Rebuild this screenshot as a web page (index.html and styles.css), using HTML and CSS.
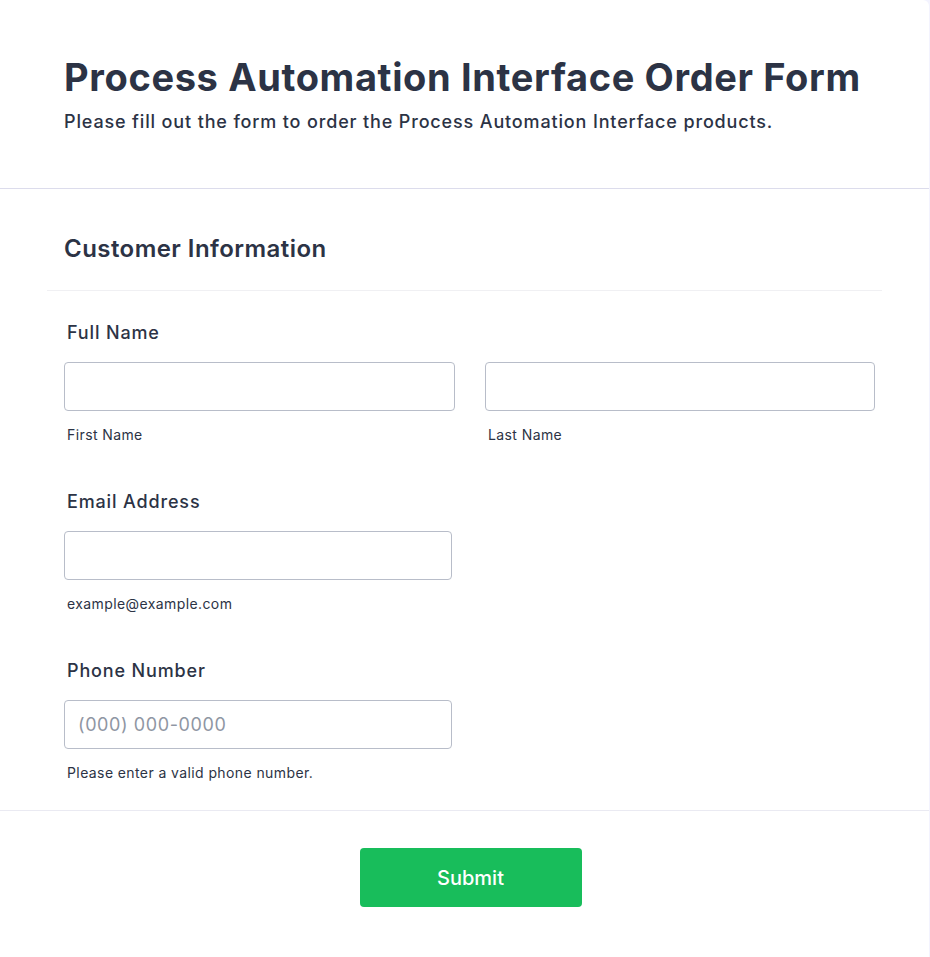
FILE: index.html
```html
<!DOCTYPE html>
<html lang="en">
<head>
<meta charset="utf-8">
<title>Process Automation Interface Order Form</title>
<link rel="stylesheet" href="styles.css">
</head>
<body>
<div class="card">
  <header class="form-header">
    <h1 class="title">Process Automation Interface Order Form</h1>
    <p class="subtitle">Please fill out the form to order the Process Automation Interface products.</p>
  </header>
  <section class="section">
    <h2 class="section-title">Customer Information</h2>
    <div class="section-rule"></div>
    <div class="field">
      <label class="label">Full Name</label>
      <div class="name-row">
        <div class="sub">
          <input class="input" type="text">
          <span class="hint">First Name</span>
        </div>
        <div class="sub">
          <input class="input" type="text">
          <span class="hint">Last Name</span>
        </div>
      </div>
    </div>
    <div class="field">
      <label class="label">Email Address</label>
      <div class="sub single">
        <input class="input" type="email">
        <span class="hint">example@example.com</span>
      </div>
    </div>
    <div class="field">
      <label class="label">Phone Number</label>
      <div class="sub single">
        <input class="input" type="tel" placeholder="(000) 000-0000">
        <span class="hint">Please enter a valid phone number.</span>
      </div>
    </div>
  </section>
  <footer class="form-footer">
    <button class="submit" type="button">Submit</button>
  </footer>
</div>
</body>
</html>
```
FILE: styles.css
```css
* { box-sizing: border-box; }
html, body { margin: 0; padding: 0; }
body {
  background: #f3f3fe;
  font-family: Inter, "Noto Sans", sans-serif;
  color: #2c3345;
}
.card {
  width: 929px;
  min-height: 957px;
  background: #fff;
  border-top-right-radius: 6px;
}
.form-header {
  padding: 54px 64px 0;
  height: 189px;
  border-bottom: 1px solid #dcdcec;
}
.title {
  margin: 0;
  font-size: 38px;
  line-height: 46px;
  font-weight: 700;
  letter-spacing: 0.64px;
}
.subtitle {
  margin: 9px 0 0;
  font-size: 18px;
  line-height: 26px;
  font-weight: 500;
  letter-spacing: 0.85px;
}
.section {
  padding: 0 47px 28px;
  border-bottom: 1px solid #eaeaf2;
}
.section-title {
  margin: 0;
  padding: 45px 17px 0;
  font-size: 24px;
  line-height: 30px;
  font-weight: 600;
  letter-spacing: 0.45px;
  height: 101px;
}
.section-rule {
  height: 1px;
  background: #f0f0f3;
  margin-bottom: 30px;
}
.field {
  padding: 0 7px 0 17px;
  margin-bottom: 46px;
}
.field:last-child { margin-bottom: 0; }
.label {
  display: block;
  padding-left: 3px;
  font-size: 18px;
  line-height: 24px;
  font-weight: 500;
  letter-spacing: 0.85px;
  margin-bottom: 17px;
}
.name-row {
  display: grid;
  grid-template-columns: 391px 390px;
  gap: 30px;
}
.sub { display: flex; flex-direction: column; }
.sub.single { width: 388px; }
.input {
  height: 49px;
  width: 100%;
  border: 1px solid #b8bdc9;
  border-radius: 4px;
  padding: 0 13px;
  font-family: inherit;
  font-size: 18px;
  letter-spacing: 0.6px;
  color: #2c3345;
  background: #fff;
}
.input::placeholder { color: #8f96a3; }
.hint {
  padding-left: 3px;
  margin-top: 15px;
  font-size: 14px;
  line-height: 18px;
  letter-spacing: 0.4px;
  color: #2c3345;
}
.form-footer {
  display: flex;
  justify-content: center;
  padding-top: 37px;
}
.submit {
  width: 222px;
  height: 59px;
  margin-left: 12px;
  background: #18bd5b;
  border: none;
  border-radius: 4px;
  color: #fff;
  font-family: inherit;
  font-size: 20px;
  font-weight: 500;
  letter-spacing: 0;
}
```
